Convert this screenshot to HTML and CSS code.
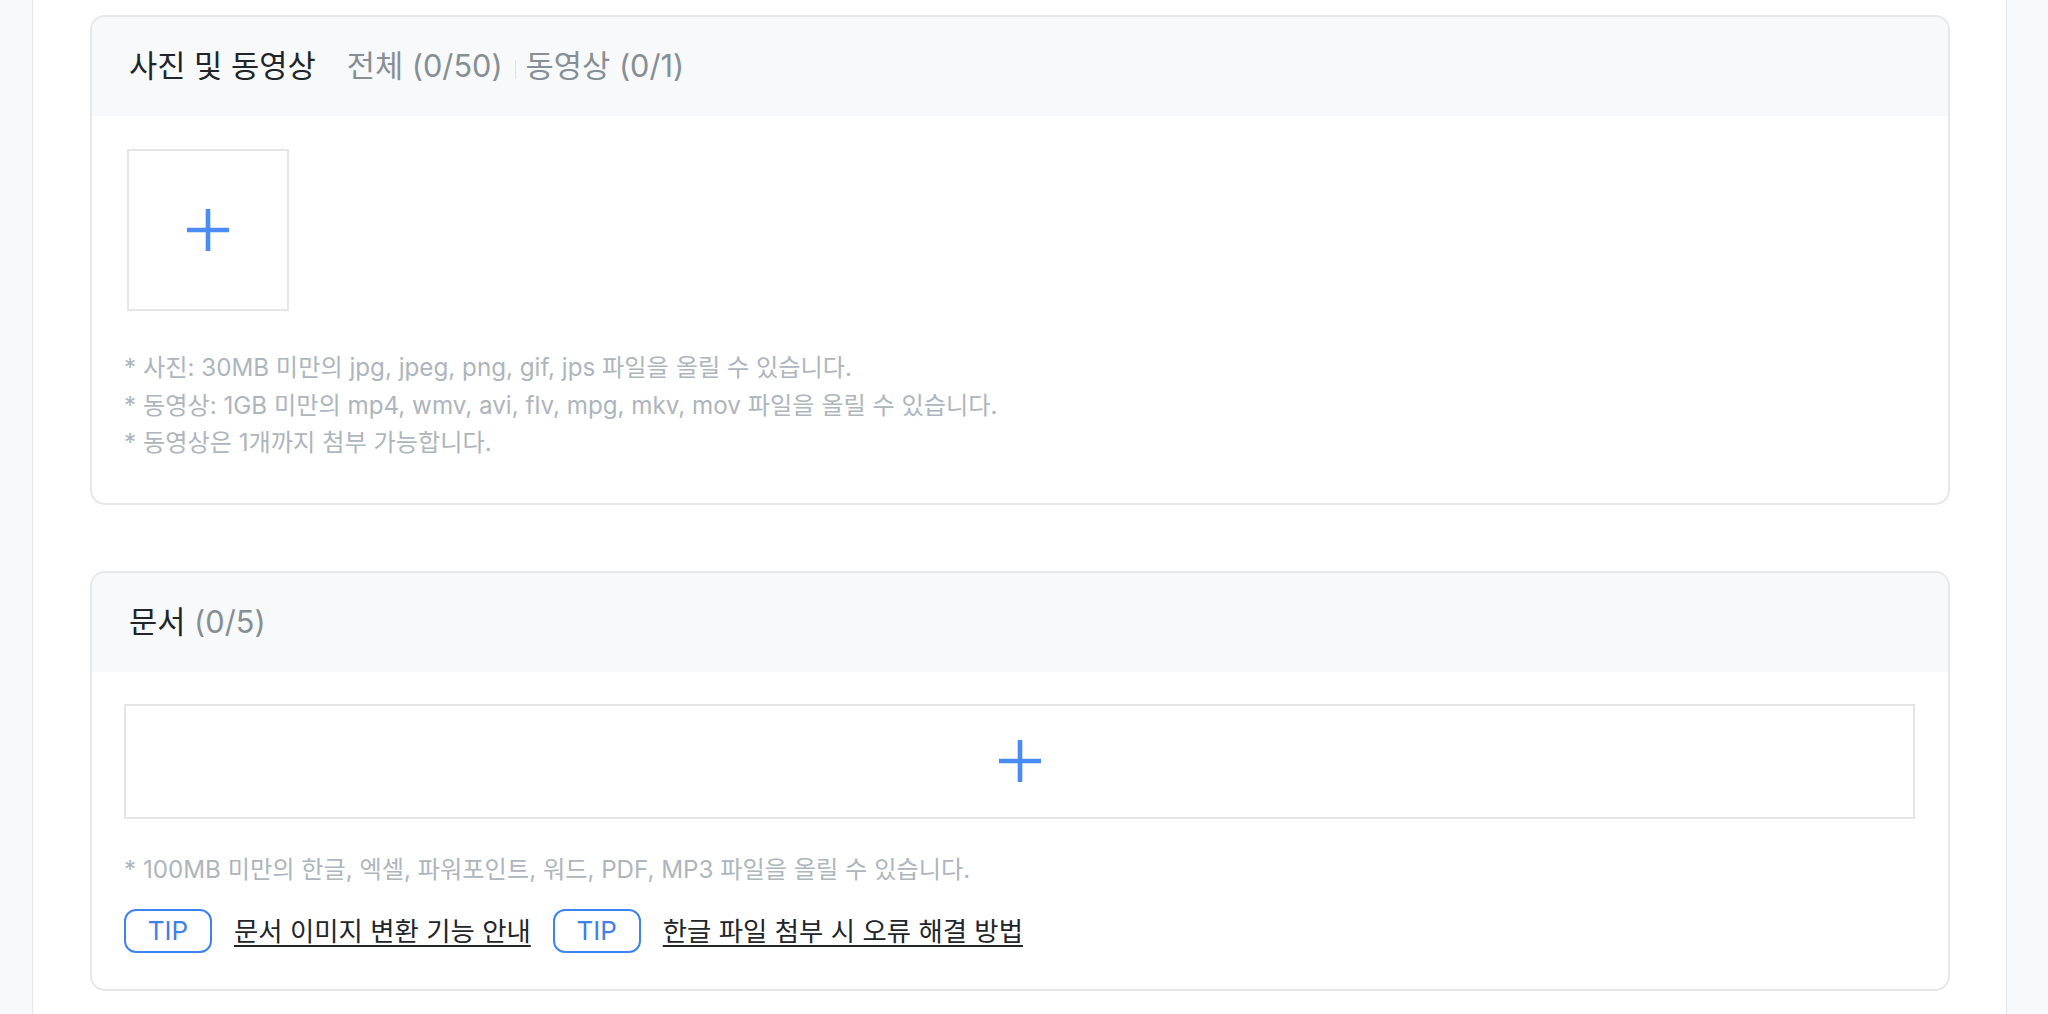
FILE: index.html
```html
<!DOCTYPE html>
<html lang="ko">
<head>
<meta charset="utf-8">
<title>첨부파일</title>
<link rel="stylesheet" href="styles.css">
</head>
<body>
<div class="page">
  <aside class="rail rail-left"></aside>
  <main class="main">
    <section class="card">
      <header class="card-head">
        <h2 class="card-title">사진 및 동영상</h2>
        <span class="count count-first">전체 (0/50)</span>
        <span class="sep"></span>
        <span class="count">동영상 (0/1)</span>
      </header>
      <div class="card-body card-body-photo">
        <div class="photo-list">
          <button class="add-box add-photo" type="button" aria-label="사진 추가">
            <svg class="plus" width="42" height="42" viewBox="0 0 42 42"><path d="M21 0V42M0 21H42" stroke="#4b8bf5" stroke-width="4.6" fill="none"/></svg>
          </button>
        </div>
        <ul class="notes notes-photo">
          <li>* 사진: 30MB 미만의 jpg, jpeg, png, gif, jps 파일을 올릴 수 있습니다.</li>
          <li>* 동영상: 1GB 미만의 mp4, wmv, avi, flv, mpg, mkv, mov 파일을 올릴 수 있습니다.</li>
          <li>* 동영상은 1개까지 첨부 가능합니다.</li>
        </ul>
      </div>
    </section>

    <section class="card card-doc">
      <header class="card-head">
        <h2 class="card-title">문서 <span class="count-inline">(0/5)</span></h2>
      </header>
      <div class="card-body card-body-doc">
        <button class="add-box add-doc" type="button" aria-label="문서 추가">
          <svg class="plus" width="42" height="42" viewBox="0 0 42 42"><path d="M21 0V42M0 21H42" stroke="#4b8bf5" stroke-width="4.6" fill="none"/></svg>
        </button>
        <ul class="notes notes-doc">
          <li>* 100MB 미만의 한글, 엑셀, 파워포인트, 워드, PDF, MP3 파일을 올릴 수 있습니다.</li>
        </ul>
        <div class="tips">
          <span class="tip-badge">TIP</span>
          <a class="tip-link" href="#">문서 이미지 변환 기능 안내</a>
          <span class="tip-badge">TIP</span>
          <a class="tip-link" href="#">한글 파일 첨부 시 오류 해결 방법</a>
        </div>
      </div>
    </section>
  </main>
  <aside class="rail rail-right"></aside>
</div>
</body>
</html>
```

FILE: styles.css
```css
* {
  box-sizing: border-box;
}

html, body {
  margin: 0;
  padding: 0;
  height: 100%;
  background: #ffffff;
  font-family: Inter, "Noto Sans CJK KR", sans-serif;
  color: #212529;
}

.page {
  display: flex;
  min-height: 100%;
}

.rail {
  flex: none;
  background: #f8f9fa;
}

.rail-left {
  width: 33px;
  border-right: 1.5px solid #e3e5e8;
}

.rail-right {
  width: 42px;
  border-left: 1.5px solid #e3e5e8;
}

.main {
  flex: 1;
  padding: 15px 56px 0 57px;
  background: #ffffff;
}

.card {
  border: 2px solid #e6e7e9;
  border-radius: 15px;
  overflow: hidden;
  background: #ffffff;
}

.card-doc {
  margin-top: 66px;
}

.card-head {
  display: flex;
  align-items: center;
  height: 99px;
  padding-left: 37px;
  background: #f8f9fa;
}

.card-title {
  margin: 0;
  font-size: 30.7px;
  font-weight: 400;
  color: #212529;
  line-height: 1;
}

.count {
  font-size: 30.7px;
  color: #868e96;
  line-height: 1;
}

.count-first {
  margin-left: 31px;
}

.count-inline {
  color: #868e96;
}

.sep {
  display: inline-block;
  width: 1px;
  height: 19px;
  margin: 5px 10px 0 12px;
  background: #dee2e6;
}

.card-body-photo {
  padding: 33px 33px 41px 32px;
}

.card-body-doc {
  padding: 32px 33px 36px 32px;
}

.photo-list {
  display: flex;
  padding-left: 3px;
}

.add-box {
  display: flex;
  align-items: center;
  justify-content: center;
  border: 2px solid #e4e5e7;
  background: #ffffff;
  padding: 0;
  cursor: pointer;
}

.add-photo {
  width: 162px;
  height: 162px;
}

.add-doc {
  width: 100%;
  height: 115px;
}

.notes {
  list-style: none;
  margin: 0;
  padding: 0;
  font-size: 24.2px;
  line-height: 37.5px;
  color: #adb5bd;
}

.notes-photo {
  margin-top: 38px;
}

.notes-doc {
  margin-top: 32px;
}

.tips {
  display: flex;
  align-items: center;
  gap: 22px;
  margin-top: 21px;
}

.tip-badge {
  display: flex;
  align-items: center;
  justify-content: center;
  width: 88px;
  height: 44px;
  border: 2px solid #3f83f3;
  border-radius: 12px;
  font-size: 26px;
  color: #3f7fe6;
  line-height: 1;
}

.tip-link {
  font-size: 26.4px;
  color: #212529;
  text-decoration: underline;
  text-underline-offset: 4px;
  line-height: 1;
}
```
